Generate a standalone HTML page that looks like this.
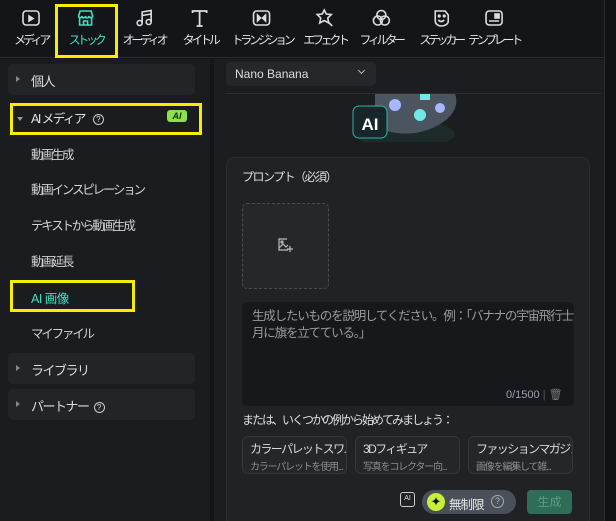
<!DOCTYPE html><html><head><meta charset="utf-8"><style>
*{margin:0;padding:0;box-sizing:border-box}
html,body{width:616px;height:521px;overflow:hidden}
body{background:#141518;font-family:"Liberation Sans","Noto Sans CJK JP",sans-serif;color:#d6d8dc;position:relative;font-size:12px}
.a{position:absolute}
.tb{top:0;left:0;width:604px;height:58px;background:#141518;border-bottom:1px solid #2a2c30}
.ti{position:absolute;top:8px;text-align:center;font-size:12px;color:#e4e4e4;white-space:nowrap;transform:translateX(-50%)}
.ti svg{display:block;margin:0 auto 3px}
.ti span{display:inline-block;letter-spacing:-3.3px}
.side{left:0;top:59px;width:210px;height:462px;background:#1a1c1f}
.main{left:214px;top:59px;width:390px;height:462px;background:#1b1d20}
.rs{left:604px;top:0;width:12px;height:521px;background:#111214;border-left:1px solid #2a2c30}
.grp{left:8px;width:187px;height:31px;background:#222428;border-radius:5px;font-size:13px;color:#dcdde0}
.grp span{position:absolute;left:23px;top:7px;letter-spacing:-1.5px}
.grp i{position:absolute;left:8px;top:12px;border-left:4px solid #888;border-top:3px solid transparent;border-bottom:3px solid transparent}
.q{display:inline-block;width:11px;height:11px;border:1.3px solid #ccc;border-radius:50%;font-size:8px;text-align:center;line-height:9px;letter-spacing:0;vertical-align:1px}
.it{left:31px;font-size:12.5px;color:#d0d2d6;letter-spacing:-2.2px}
.yb{border:3px solid #f5ee00}
.chip{top:436px;width:105px;height:38px;background:#24262a;border:1px solid #35373b;border-radius:6px;padding:3px 0 0 7px;white-space:nowrap;overflow:hidden}
.chip b{display:block;font-weight:normal;font-size:12px;color:#d8d8d8;letter-spacing:-1.6px}
.chip s{display:block;text-decoration:none;font-size:10px;color:#8a8c90;margin-top:1px;letter-spacing:-1.2px}
</style></head><body>
<div class="a tb"></div>
<div class="a rs"></div>
<div class="ti" style="left:31px"><svg width="20" height="20" viewBox="0 0 20 20" fill="none" stroke="#ddd" stroke-width="1.6"><rect x="2" y="3" width="16" height="14" rx="3"/><path d="M8 8v5l4-2.5z" fill="#ddd"/></svg><span>メディア</span></div>
<div class="ti" style="left:86px;color:#3fe0c0"><svg width="20" height="20" viewBox="0 0 20 20" fill="none" stroke="#3fe0c0" stroke-width="1.6"><path d="M3 8l1.5-5h11L17 8c0 2-3 2.5-3.5 0-0.5 2.5-3.5 2.5-3.5 0-0.5 2.5-3.5 2.5-3.5 0C6 10.5 3 10 3 8z"/><path d="M4 10v7h12v-7M8 17v-4h4v4"/></svg><span>ストック</span></div>
<div class="ti" style="left:144px"><svg width="20" height="20" viewBox="0 0 20 20" fill="none" stroke="#ddd" stroke-width="1.6"><circle cx="6" cy="15" r="2.5"/><circle cx="15" cy="14" r="2.5"/><path d="M8.5 15V4l9-1.5V14M8.5 7.5l9-1.5"/></svg><span>オーディオ</span></div>
<div class="ti" style="left:200px"><svg width="20" height="20" viewBox="0 0 20 20" fill="none" stroke="#ddd" stroke-width="1.8"><path d="M3 5V3h14v2M10 3v15M7 18h6"/></svg><span>タイトル</span></div>
<div class="ti" style="left:262px"><svg width="20" height="20" viewBox="0 0 20 20" fill="none" stroke="#ddd" stroke-width="1.6"><rect x="2" y="3" width="16" height="14" rx="3"/><path d="M6 7v6l3-3zM14 7v6l-3-3z" fill="#ddd"/></svg><span>トランジション</span></div>
<div class="ti" style="left:325px"><svg width="20" height="20" viewBox="0 0 20 20" fill="none" stroke="#ddd" stroke-width="1.6"><path d="M9 2l2 4 5 .5-3.5 3.5 1 5L9 12.5 4.5 15l1-5L2 6.5 7 6z"/><path d="M13 14l4 4"/></svg><span>エフェクト</span></div>
<div class="ti" style="left:381px"><svg width="20" height="20" viewBox="0 0 20 20" fill="none" stroke="#ddd" stroke-width="1.6"><circle cx="10" cy="7" r="4.5"/><circle cx="6.5" cy="12.5" r="4.5"/><circle cx="13.5" cy="12.5" r="4.5"/></svg><span>フィルター</span></div>
<div class="ti" style="left:441px"><svg width="20" height="20" viewBox="0 0 20 20" fill="none" stroke="#ddd" stroke-width="1.6"><path d="M4 3h10l3 4v6c0 3-3 5-7 5-3 0-6-2-6-5z"/><circle cx="8" cy="8" r=".8" fill="#ddd"/><circle cx="13" cy="8" r=".8" fill="#ddd"/><path d="M7 12c2 2 4 2 6 0"/></svg><span>ステッカー</span></div>
<div class="ti" style="left:494px"><svg width="20" height="20" viewBox="0 0 20 20" fill="none" stroke="#ddd" stroke-width="1.6"><rect x="2" y="3" width="16" height="14" rx="3"/><path d="M5 13h10"/><rect x="11" y="6" width="4" height="4" fill="#ddd"/></svg><span>テンプレート</span></div>
<div class="a yb" style="left:55px;top:4px;width:63px;height:54px"></div>

<div class="a side"></div>
<div class="a main"></div>
<div class="a grp" style="top:64px"><i></i><span>個人</span></div>
<div class="a" style="left:17px;top:117px;border-top:4px solid #999;border-left:3px solid transparent;border-right:3px solid transparent"></div>
<div class="a" style="left:31px;top:108px;font-size:12.5px;color:#e0e0e0;letter-spacing:-1.5px">AI メディア <b class="q" style="font-weight:normal;margin-left:6px">?</b></div>
<div class="a" style="left:167px;top:110px;width:20px;height:12px;background:#8ee04a;border-radius:3px;color:#1a2a10;font-size:9px;font-weight:bold;font-style:italic;text-align:center;line-height:12px">AI</div>
<div class="a yb" style="left:10px;top:103px;width:192px;height:32px"></div>
<div class="a it" style="top:144px">動画生成</div>
<div class="a it" style="top:179px">動画インスピレーション</div>
<div class="a it" style="top:215px">テキストから動画生成</div>
<div class="a it" style="top:251px">動画延長</div>
<div class="a it" style="top:288px;color:#3fe0c0;letter-spacing:-0.5px">AI 画像</div>
<div class="a yb" style="left:10px;top:280px;width:125px;height:32px"></div>
<div class="a it" style="top:323px">マイファイル</div>
<div class="a grp" style="top:353px"><i></i><span>ライブラリ</span></div>
<div class="a grp" style="top:389px"><i></i><span>パートナー <b class="q" style="font-weight:normal;margin-left:3px">?</b></span></div>

<div class="a" style="left:226px;top:62px;width:150px;height:24px;background:#25272b;border-radius:5px;font-size:12px;padding:5px 9px;color:#ddd">Nano Banana<b style="position:absolute;right:12px;top:6px;width:5px;height:5px;border-right:1.3px solid #bbb;border-bottom:1.3px solid #bbb;transform:rotate(45deg)"></b></div>
<div class="a" style="left:225px;top:93px;width:376px;height:1px;background:#2c2e32"></div>
<svg class="a" style="left:345px;top:94px" width="120" height="48" viewBox="0 0 120 48"><ellipse cx="60" cy="40" rx="50" ry="14" fill="#1f3a34" opacity=".5"/><path d="M30 0h80c4 10 0 25-25 35-20 8-45 5-55-5z" fill="#4a5560"/><circle cx="50" cy="11" r="6" fill="#a8b8ff"/><circle cx="75" cy="21" r="6" fill="#6ee8e8"/><circle cx="95" cy="14" r="5" fill="#a8b8ff"/><rect x="75" y="0" width="10" height="6" fill="#6ee8e8"/><rect x="8" y="12" width="34" height="32" rx="6" fill="#17262a" stroke="#2ab8a0"/><text x="25" y="36" font-family="Liberation Sans" font-weight="bold" font-size="17" fill="#fff" text-anchor="middle">AI</text></svg>
<div class="a" style="left:226px;top:157px;width:364px;height:364px;background:#202226;border:1px solid #2a2c30;border-bottom:none;border-radius:8px 8px 0 0"></div>
<div class="a" style="left:242px;top:168px;font-size:12px;color:#ddd;letter-spacing:-1.5px">プロンプト（必須）</div>
<div class="a" style="left:242px;top:203px;width:87px;height:86px;border:1.5px dashed #4a4c50;border-radius:5px;background:#25272b"></div>
<svg class="a" style="left:277px;top:237px" width="16" height="16" viewBox="0 0 16 16" fill="none" stroke="#bbb" stroke-width="1.2"><path d="M10 2H2v11h9M2 11l4-4 3 3 2-2"/><circle cx="5" cy="5" r="1"/><path d="M13 9v6M10 12h6"/></svg>
<div class="a" style="left:242px;top:302px;width:332px;height:104px;background:#17181b;border-radius:5px;padding:6px 6px 6px 10px;font-size:12.5px;line-height:17px;color:#9a9ca0;letter-spacing:-1.2px;white-space:nowrap;overflow:hidden">生成したいものを説明してください。例：「バナナの宇宙飛行士が<br>月に旗を立てている。」</div>
<div class="a" style="left:506px;top:388px;font-size:11px;color:#9aa0b0">0/1500 <span style="color:#555">|</span> <span style="color:#777">🗑</span></div>
<div class="a" style="left:242px;top:411px;font-size:12px;color:#ddd;letter-spacing:-2px">または、いくつかの例から始めてみましょう：</div>
<div class="a chip" style="left:242px"><b>カラーパレットスワ...</b><s>カラーパレットを使用...</s></div>
<div class="a chip" style="left:355px"><b>3Dフィギュア</b><s>写真をコレクター向...</s></div>
<div class="a chip" style="left:468px"><b>ファッションマガジン</b><s>画像を編集して雑...</s></div>
<div class="a" style="left:400px;top:492px;width:15px;height:15px;border:1.3px solid #ccc;border-radius:3px;font-size:7px;text-align:center;line-height:12px;color:#ddd">AI</div>
<div class="a" style="left:422px;top:490px;width:94px;height:24px;background:#4a505a;border-radius:12px"></div>
<div class="a" style="left:427px;top:493px;width:18px;height:18px;background:#c6f03a;border-radius:50%;color:#111;font-size:13px;text-align:center;line-height:18px">✦</div>
<div class="a" style="left:449px;top:494px;font-size:12.5px;color:#e6e6e6;letter-spacing:-1px">無制限</div>
<div class="a" style="left:491px;top:495px;width:13px;height:13px;border:1.3px solid #aaa;border-radius:50%;font-size:9px;text-align:center;line-height:11px;color:#bbb">?</div>
<div class="a" style="left:527px;top:490px;width:45px;height:24px;background:#2e6e58;border-radius:4px;font-size:12px;text-align:center;line-height:24px;color:#5e9a84">生成</div>
</body></html>
